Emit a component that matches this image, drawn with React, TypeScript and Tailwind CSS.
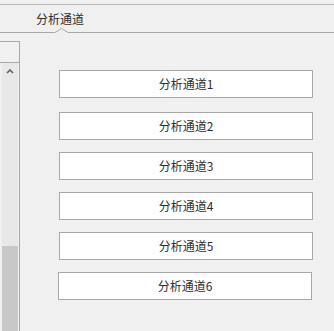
import React from "react";

const font = { fontFamily: '"Microsoft YaHei", "Noto Sans CJK SC", "Noto Sans", sans-serif' };

export default function App() {
  const items = ["分析通道1", "分析通道2", "分析通道3", "分析通道4", "分析通道5", "分析通道6"];
  return (
    <div className="w-[334px] h-[331px] bg-[#f0f0f0] overflow-hidden flex flex-col text-[12px] text-[#2e2e2e]" style={font}>
      <div className="h-[4px] shrink-0" />
      <div className="h-px bg-[#b9b9b9] shrink-0" />
      <div className="relative h-[28px] shrink-0 border-b border-[#a8a8a8] pl-[36px] flex items-center leading-none pt-[1px]">
        <span>分析通道</span>
        <svg className="absolute left-[55px] bottom-[-1px]" width="13" height="5" viewBox="0 0 13 5">
          <rect x="0" y="4" width="13" height="1" fill="#f0f0f0" />
          <polyline points="0,4.5 6.5,0.5 13,4.5" fill="none" stroke="#a8a8a8" strokeWidth="1" />
        </svg>
      </div>
      <div className="flex flex-1 min-h-0">
        <div className="w-[20px] shrink-0 mt-[8px] flex flex-col border-r border-[#a8a8a8]">
          <div className="h-[22px] border-y border-[#a8a8a8] shrink-0" />
          <div className="flex-1 flex flex-col pl-[2px] pr-[1px]">
            <div className="h-[183px] bg-[#e8e8e8] flex justify-center pt-[6px]">
              <svg width="8" height="5" viewBox="0 0 8 5">
                <polyline points="1,4 4,1 7,4" fill="none" stroke="#606060" strokeWidth="1.6" />
              </svg>
            </div>
            <div className="flex-1 bg-[#c8c8c8]" />
          </div>
        </div>
        <div className="flex flex-col pl-[39px] pt-[37px]">
          {items.map((t, i) => (
            <div
              key={t}
              className={
                "w-[254px] h-[28px] bg-white border border-[#a8a8a8] flex items-center justify-center leading-none " +
                (i === 0 ? "" : i === 1 ? "mt-[14px]" : "mt-[12px]") +
                (i === 5 ? " -ml-px" : "")
              }
            >
              {t}
            </div>
          ))}
        </div>
      </div>
    </div>
  );
}
